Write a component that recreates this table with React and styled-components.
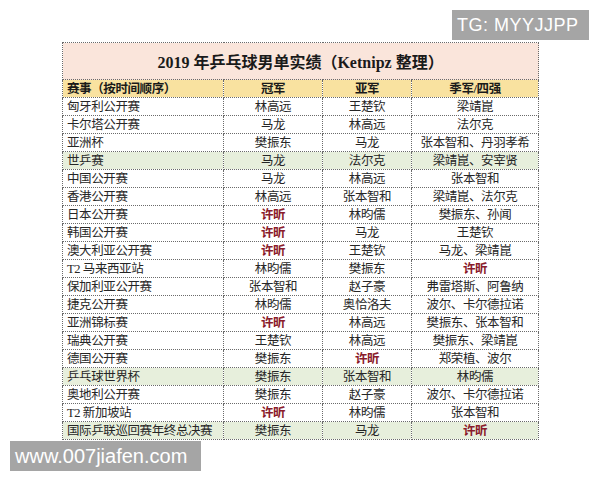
import React from "react";
import styled, { createGlobalStyle } from "styled-components";

const Global = createGlobalStyle`
  html, body { margin: 0; padding: 0; background: #ffffff; }
  body { width: 600px; height: 480px; overflow: hidden; }
`;

const Page = styled.div`
  position: relative;
  width: 600px;
  height: 480px;
  padding: 42px 0 0 62px;
  box-sizing: border-box;
  font-family: "Liberation Serif", "Noto Sans CJK SC", serif;
`;

const Sheet = styled.table`
  border-collapse: collapse;
  table-layout: fixed;
  width: 476px;
  color: #262626;
  font-size: 12.5px;
  letter-spacing: -0.4px;
`;

const Col = styled.col`
  width: ${(p) => p.$w}px;
`;

const TitleCell = styled.th`
  height: 36px;
  padding: 0;
  background: #fae5db;
  border: 1px dotted #6a6a6a;
  font-size: 16px;
  font-weight: 700;
  letter-spacing: 0;
  color: #1a1a1a;
  text-align: center;
  vertical-align: middle;
`;

const Row = styled.tr`
  height: 18px;
  background: ${(p) =>
    p.$tone === "head" ? "#f9e2a0" : p.$tone === "green" ? "#e7efdc" : "#ffffff"};
`;

const Cell = styled.td`
  padding: 0 4px;
  border: 1px dotted #6a6a6a;
  line-height: 16px;
  white-space: nowrap;
  overflow: hidden;
  text-align: ${(p) => (p.$left ? "left" : "center")};
  font-weight: ${(p) => (p.$bold ? 700 : 400)};
  color: ${(p) => (p.$bold ? "#1a1a1a" : "inherit")};
`;

const Winner = styled.span`
  color: #8a1c2b;
  font-weight: 700;
`;

const Watermark = styled.div`
  position: absolute;
  ${(p) => (p.$corner === "top" ? "top: 10px; left: 452px; width: 137px; height: 30px;" : "top: 441px; left: 10px; width: 191px; height: 30px;")}
  background: #a5a5a5;
  color: #ffffff;
  font-family: "Liberation Sans", Arial, sans-serif;
  font-size: ${(p) => (p.$corner === "top" ? "18px" : "20px")};
  letter-spacing: ${(p) => (p.$corner === "top" ? "0.5px" : "0")};
  display: flex;
  align-items: center;
  padding-left: ${(p) => (p.$corner === "top" ? "5px" : "5px")};
  box-sizing: border-box;
`;

const R = "许昕";

const rows = [
  ["匈牙利公开赛", "林高远", "王楚钦", "梁靖崑"],
  ["卡尔塔公开赛", "马龙", "林高远", "法尔克"],
  ["亚洲杯", "樊振东", "马龙", "张本智和、丹羽孝希"],
  ["世乒赛", "马龙", "法尔克", "梁靖崑、安宰贤", "green"],
  ["中国公开赛", "马龙", "林高远", "张本智和"],
  ["香港公开赛", "林高远", "张本智和", "梁靖崑、法尔克"],
  ["日本公开赛", R, "林昀儒", "樊振东、孙闻"],
  ["韩国公开赛", R, "马龙", "王楚钦"],
  ["澳大利亚公开赛", R, "王楚钦", "马龙、梁靖崑"],
  ["T2 马来西亚站", "林昀儒", "樊振东", R],
  ["保加利亚公开赛", "张本智和", "赵子豪", "弗雷塔斯、阿鲁纳"],
  ["捷克公开赛", "林昀儒", "奥恰洛夫", "波尔、卡尔德拉诺"],
  ["亚洲锦标赛", R, "林高远", "樊振东、张本智和"],
  ["瑞典公开赛", "王楚钦", "林高远", "樊振东、梁靖崑"],
  ["德国公开赛", "樊振东", R, "郑荣植、波尔"],
  ["乒乓球世界杯", "樊振东", "张本智和", "林昀儒", "green"],
  ["奥地利公开赛", "樊振东", "赵子豪", "波尔、卡尔德拉诺"],
  ["T2 新加坡站", R, "林昀儒", "张本智和"],
  ["国际乒联巡回赛年终总决赛", "樊振东", "马龙", R, "green"],
];

const Name = ({ v }) => (v === R ? <Winner>{v}</Winner> : v);

export default function App() {
  return (
    <Page>
      <Global />
      <Sheet>
        <colgroup>
          <Col $w={161} />
          <Col $w={99} />
          <Col $w={89} />
          <Col $w={127} />
        </colgroup>
        <thead>
          <tr>
            <TitleCell colSpan={4}>2019 年乒乓球男单实绩（Ketnipz 整理）</TitleCell>
          </tr>
          <Row $tone="head">
            <Cell $left $bold>赛事（按时间顺序）</Cell>
            <Cell $bold>冠军</Cell>
            <Cell $bold>亚军</Cell>
            <Cell $bold>季军/四强</Cell>
          </Row>
        </thead>
        <tbody>
          {rows.map(([ev, a, b, c, tone]) => (
            <Row key={ev} $tone={tone}>
              <Cell $left>{ev}</Cell>
              <Cell><Name v={a} /></Cell>
              <Cell><Name v={b} /></Cell>
              <Cell><Name v={c} /></Cell>
            </Row>
          ))}
        </tbody>
      </Sheet>
      <Watermark $corner="top">TG: MYYJJPP</Watermark>
      <Watermark $corner="bottom">www.007jiafen.com</Watermark>
    </Page>
  );
}
